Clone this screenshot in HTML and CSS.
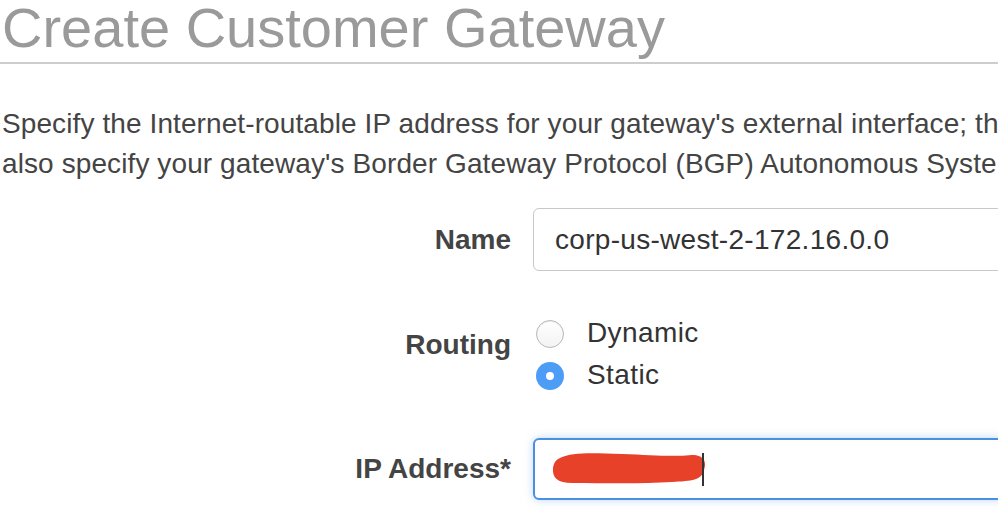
FILE: index.html
```html
<!DOCTYPE html>
<html>
<head>
<meta charset="utf-8">
<link rel="stylesheet" href="styles.css">
</head>
<body>
<div class="page">
  <h1 class="title">Create Customer Gateway</h1>
  <div class="intro">
    <p class="intro-line">Specify the Internet-routable IP address for your gateway's external interface; th</p>
    <p class="intro-line">also specify your gateway's Border Gateway Protocol (BGP) Autonomous Syste</p>
  </div>
  <div class="form">
    <div class="row row-name">
      <label class="label">Name</label>
      <div class="field"><div class="input">corp-us-west-2-172.16.0.0</div></div>
    </div>
    <div class="row row-routing">
      <label class="label label-routing">Routing</label>
      <div class="field radios">
        <div class="radio-opt"><span class="radio"></span><span class="radio-text">Dynamic</span></div>
        <div class="radio-opt"><span class="radio checked"></span><span class="radio-text">Static</span></div>
      </div>
    </div>
    <div class="row row-ip">
      <label class="label">IP Address*</label>
      <div class="field">
        <div class="input focused">
          <svg class="scribble" width="156" height="36" viewBox="0 0 156 36">
            <path d="M8 8 C20 2 40 3 70 4 C100 5 120 7 140 5 C152 5 155 12 152 20 C150 30 140 31 120 32 C90 34 50 33 20 33 C6 33 0 28 1 18 C2 12 4 10 8 8 Z" fill="#e8412a"/>
          </svg>
          <span class="caret"></span>
        </div>
      </div>
    </div>
  </div>
</div>
</body>
</html>
```
FILE: styles.css
```css
html, body {
  margin: 0;
  padding: 0;
  background: #fff;
  overflow: hidden;
}
body {
  width: 998px;
  height: 526px;
  font-family: "Liberation Sans", Arial, sans-serif;
}
.page {
  width: 998px;
}
.title {
  margin: 0;
  height: 62px;
  padding-left: 2px;
  font-size: 56px;
  line-height: 56px;
  font-weight: 400;
  color: #9a9a9a;
  border-bottom: 2px solid #cdcdcd;
  box-sizing: content-box;
  white-space: nowrap;
}
.intro {
  margin: 40px 0 0 0;
  padding-left: 2px;
  width: 996px;
  overflow: hidden;
}
.intro-line {
  margin: 0;
  font-size: 28px;
  line-height: 40px;
  color: #444;
  white-space: nowrap;
  letter-spacing: 0.1px;
}
.form {
  margin-top: 24px;
}
.row {
  display: grid;
  grid-template-columns: 511px 1fr;
  column-gap: 22px;
  align-items: center;
}
.label {
  text-align: right;
  font-size: 28px;
  font-weight: 700;
  color: #444;
}
.field {
  min-width: 0;
}
.input {
  position: relative;
  width: 600px;
  height: 63px;
  box-sizing: border-box;
  border: 1px solid #c8c8c8;
  border-radius: 6px;
  padding: 0 21px;
  display: flex;
  align-items: center;
  font-size: 28px;
  color: #333;
  letter-spacing: 0.3px;
}
.input.focused {
  height: 62px;
  border: 2px solid #4a8fe0;
  box-shadow: 0 0 8px rgba(74, 143, 224, 0.35);
  padding: 0 19px;
}
.row-routing {
  margin-top: 49px;
  align-items: start;
}
.label-routing {
  padding-top: 9px;
}
.radios {
  display: flex;
  flex-direction: column;
  gap: 14px;
}
.radio-opt {
  display: flex;
  align-items: center;
  height: 28px;
}
.radio {
  width: 28px;
  height: 28px;
  box-sizing: border-box;
  border-radius: 50%;
  border: 1px solid #b8b8b8;
  background: linear-gradient(#ffffff, #f3f3f3);
  box-shadow: inset 0 1px 1px rgba(0,0,0,0.08);
  margin-left: 3px;
  position: relative;
  flex: none;
}
.radio.checked {
  border: none;
  background: #4d9cf6;
  box-shadow: none;
}
.radio.checked::after {
  content: "";
  position: absolute;
  left: 10px;
  top: 10px;
  width: 8px;
  height: 8px;
  border-radius: 50%;
  background: #fff;
}
.radio-text {
  margin-left: 23px;
  font-size: 28px;
  color: #333;
  letter-spacing: 0.4px;
  line-height: 28px;
  position: relative;
  top: -1px;
}
.row-ip {
  margin-top: 48px;
}
.scribble {
  position: absolute;
  left: 17px;
  top: 10px;
}
.caret {
  position: absolute;
  left: 167px;
  top: 13px;
  width: 2px;
  height: 33px;
  background: #333;
}
```
